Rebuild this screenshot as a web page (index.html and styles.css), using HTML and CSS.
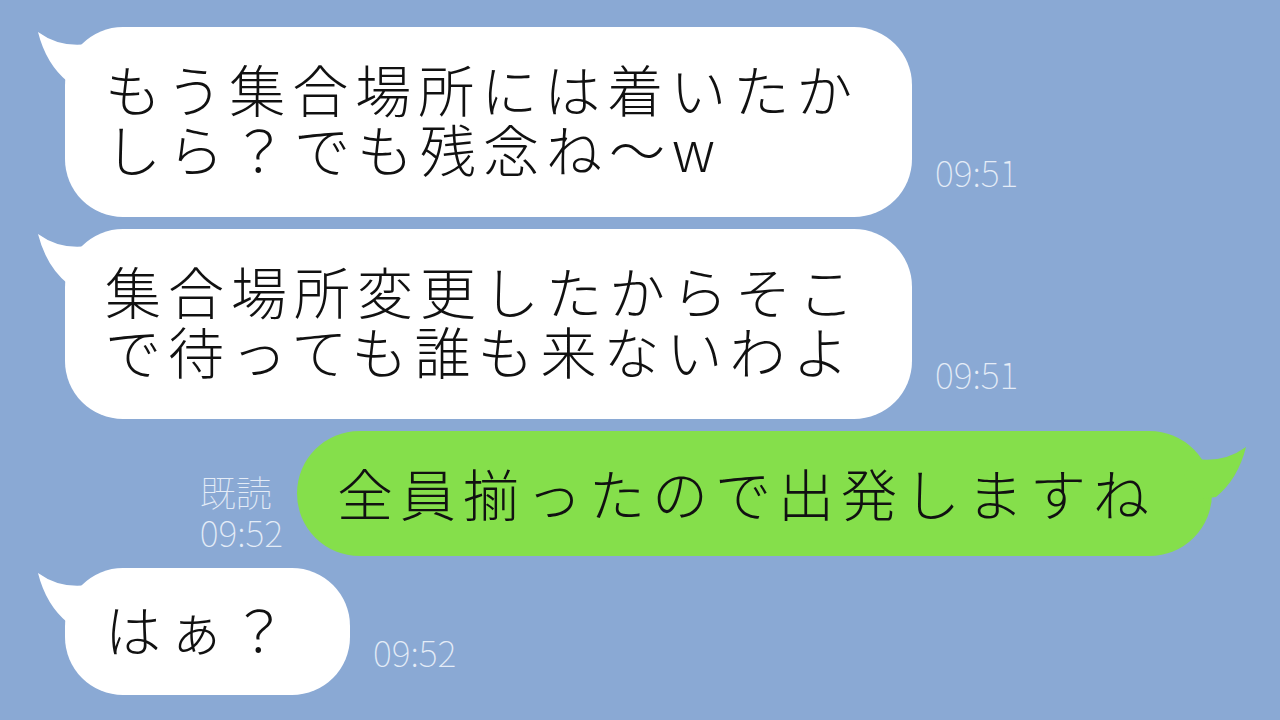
FILE: index.html
```html
<!DOCTYPE html>
<html lang="ja">
<head>
  <meta charset="utf-8">
  <title>トーク</title>
  <link rel="stylesheet" href="styles.css">
</head>
<body>
<div class="chat">

  <div class="row left">
    <div class="bubble white">
      <svg class="tail" viewBox="0 0 62 56" width="62" height="56"><path d="M0,2 Q22,18 50,14 L62,30 L45,54 L30,52 Q8,34 0,2 Z"/></svg>
      <p class="msg">もう集合場所には着いたか<br>しら？でも残念ね～w</p>
    </div>
    <span class="time">09:51</span>
  </div>

  <div class="row left">
    <div class="bubble white">
      <svg class="tail" viewBox="0 0 62 56" width="62" height="56"><path d="M0,2 Q22,18 50,14 L62,30 L45,54 L30,52 Q8,34 0,2 Z"/></svg>
      <p class="msg">集合場所変更したからそこ<br>で待っても誰も来ないわよ</p>
    </div>
    <span class="time">09:51</span>
  </div>

  <div class="row right">
    <div class="meta">
      <span>既読</span>
      <span>09:52</span>
    </div>
    <div class="bubble green">
      <svg class="tail" viewBox="0 0 62 56" width="62" height="56"><path d="M62,2 Q40,18 12,14 L0,30 L17,54 L32,52 Q54,34 62,2 Z"/></svg>
      <p class="msg">全員揃ったので出発しますね</p>
    </div>
  </div>

  <div class="row left">
    <div class="bubble white short">
      <svg class="tail" viewBox="0 0 62 56" width="62" height="56"><path d="M0,2 Q22,18 50,14 L62,30 L45,54 L30,52 Q8,34 0,2 Z"/></svg>
      <p class="msg">はぁ？</p>
    </div>
    <span class="time">09:52</span>
  </div>

</div>
</body>
</html>
```

FILE: styles.css
```css
html, body {
  margin: 0;
  height: 100%;
}
body {
  background: #8aa9d4;
  font-family: "Noto Sans CJK JP", sans-serif;
  overflow: hidden;
}

.chat {
  display: flex;
  flex-direction: column;
  gap: 12px;
  padding-top: 27px;
}

.row {
  display: flex;
  align-items: flex-end;
}
.row.left {
  padding-left: 65px;
  gap: 23px;
}
.row.right {
  justify-content: flex-end;
  padding-right: 68px;
  gap: 14px;
}

.bubble {
  position: relative;
  border-radius: 58px;
}
.bubble.white {
  background: #fff;
  fill: #fff;
  width: 847px;
  box-sizing: border-box;
  padding: 31px 40px 39px;
}
.bubble.white.short {
  width: 285px;
  padding: 30px 40px 37px;
}
.bubble.green {
  background: #85df4b;
  fill: #85df4b;
  width: 915px;
  box-sizing: border-box;
  padding: 31px 40px 34px;
  border-radius: 63px;
}

.tail {
  position: absolute;
  top: 3px;
  left: -27px;
}
.bubble.green .tail {
  left: auto;
  right: -34px;
  top: 14px;
}

.msg {
  margin: 0;
  font-size: 56px;
  font-weight: 300;
  line-height: 60px;
  letter-spacing: 7px;
  color: #111;
  white-space: nowrap;
  position: relative;
}

.time {
  font-size: 36px;
  font-weight: 100;
  line-height: 40px;
  color: #e4ecf7;
  margin-bottom: 26px;
}
.row.left .short + .time {
  margin-bottom: 24px;
}

.meta {
  display: flex;
  flex-direction: column;
  font-size: 36px;
  font-weight: 100;
  line-height: 40px;
  color: #e4ecf7;
  margin-bottom: 5px;
}
```
